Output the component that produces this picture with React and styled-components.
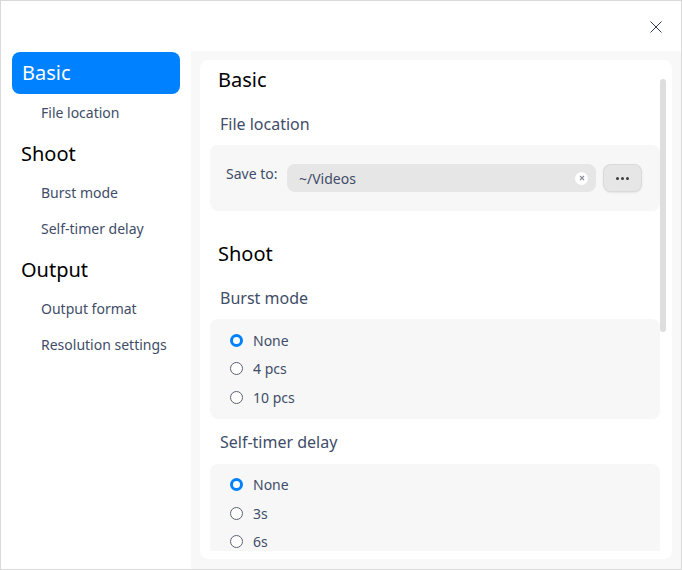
import React from 'react';
import styled, { createGlobalStyle, css } from 'styled-components';

const GlobalStyle = createGlobalStyle`
  html, body {
    margin: 0;
    padding: 0;
    background: #ffffff;
  }
  * {
    box-sizing: border-box;
  }
`;

const nav = [
  { title: 'Basic', active: true, items: ['File location'] },
  { title: 'Shoot', items: ['Burst mode', 'Self-timer delay'] },
  { title: 'Output', items: ['Output format', 'Resolution settings'] },
];

const App = () => {
  return (
    <>
      <GlobalStyle />
      <Window>
        <TitleBar>
          <CloseButton aria-label="close">
            <svg width="12" height="12" viewBox="0 0 12 12">
              <path d="M0.5 0.5 L11.5 11.5 M11.5 0.5 L0.5 11.5" stroke="#2f3a56" strokeWidth="1" fill="none" />
            </svg>
          </CloseButton>
        </TitleBar>
        <Body>
          <Sidebar>
            {nav.map((group) => (
              <React.Fragment key={group.title}>
                <NavHeading active={group.active}>{group.title}</NavHeading>
                {group.items.map((item) => (
                  <NavItem key={item}>{item}</NavItem>
                ))}
              </React.Fragment>
            ))}
          </Sidebar>
          <Panel>
            <Card>
              <Scroll>
                <SectionHeading>Basic</SectionHeading>
                <GroupTitle>File location</GroupTitle>
                <GroupBox Row>
                  <FieldLabel>Save to:</FieldLabel>
                  <PathInput>
                    <PathText>~/Videos</PathText>
                    <ClearDot>
                      <svg width="6" height="6" viewBox="0 0 6 6">
                        <path d="M1 1 L5 5 M5 1 L1 5" stroke="#8a8f99" strokeWidth="1.1" fill="none" />
                      </svg>
                    </ClearDot>
                  </PathInput>
                  <MoreButton>
                    <Dot />
                    <Dot />
                    <Dot />
                  </MoreButton>
                </GroupBox>

                <SectionHeading Spaced>Shoot</SectionHeading>
                <GroupTitle>Burst mode</GroupTitle>
                <GroupBox>
                  <RadioRow><Radio checked /><RadioLabel>None</RadioLabel></RadioRow>
                  <RadioRow><Radio /><RadioLabel>4 pcs</RadioLabel></RadioRow>
                  <RadioRow><Radio /><RadioLabel>10 pcs</RadioLabel></RadioRow>
                </GroupBox>
                <GroupTitle Near>Self-timer delay</GroupTitle>
                <GroupBox>
                  <RadioRow><Radio checked /><RadioLabel>None</RadioLabel></RadioRow>
                  <RadioRow><Radio /><RadioLabel>3s</RadioLabel></RadioRow>
                  <RadioRow><Radio /><RadioLabel>6s</RadioLabel></RadioRow>
                </GroupBox>
              </Scroll>
              <ScrollThumb />
            </Card>
          </Panel>
        </Body>
      </Window>
    </>
  );
};

const Window = styled.div`
  width: 682px;
  height: 570px;
  border: 1px solid #d9d9d9;
  background: #ffffff;
  display: flex;
  flex-direction: column;
  font-family: "Noto Sans", "Open Sans", sans-serif;
  overflow: hidden;
`;

const TitleBar = styled.div`
  height: 50px;
  flex-shrink: 0;
  display: flex;
  justify-content: flex-end;
  align-items: flex-start;
  padding: 20px 19px 0 0;
`;

const CloseButton = styled.div`
  width: 12px;
  height: 12px;
  display: flex;
`;

const Body = styled.div`
  flex: 1;
  display: flex;
  min-height: 0;
`;

const Sidebar = styled.div`
  width: 190px;
  flex-shrink: 0;
  padding: 1px 11px 0 11px;
  display: flex;
  flex-direction: column;
`;

const NavHeading = styled.div`
  height: 44px;
  padding: 4px 0 0 9px;
  font-size: 20px;
  line-height: 40px;
  color: #000000;

  ${props => props.active && css`
    height: 42px;
    padding: 0 0 0 10px;
    line-height: 42px;
    background: #0081ff;
    color: #ffffff;
    border-radius: 8px;
  `}
`;

const NavItem = styled.div`
  height: 36px;
  line-height: 34px;
  padding: 2px 0 0 29px;
  font-size: 14px;
  color: #414d68;
`;

const Panel = styled.div`
  flex: 1;
  background: #f8f8f8;
  padding: 9px 9px 10px 9px;
  display: flex;
  min-width: 0;
`;

const Card = styled.div`
  flex: 1;
  position: relative;
  background: #ffffff;
  border-radius: 8px;
  padding: 0 12px 8px 10px;
  display: flex;
  min-width: 0;
`;

const Scroll = styled.div`
  flex: 1;
  overflow: hidden;
  display: flex;
  flex-direction: column;
  padding-top: 6px;
`;

const ScrollThumb = styled.div`
  position: absolute;
  top: 19px;
  right: 6px;
  width: 6px;
  height: 253px;
  border-radius: 3px;
  background: #dedede;
`;

const SectionHeading = styled.div`
  flex-shrink: 0;
  height: 28px;
  line-height: 28px;
  padding-left: 8px;
  font-size: 20px;
  color: #000000;
  ${props => props.Spaced && css`
    margin-top: 29px;
  `}
`;

const GroupTitle = styled.div`
  flex-shrink: 0;
  height: 24px;
  line-height: 24px;
  margin-top: 18px;
  margin-bottom: 9px;
  padding-left: 10px;
  font-size: 16px;
  color: #414d68;
  ${props => props.Near && css`
    margin-top: 11px;
    margin-bottom: 10px;
  `}
`;

const GroupBox = styled.div`
  flex-shrink: 0;
  background: #f7f7f7;
  border-radius: 8px;
  padding: 7px 0 7px 20px;
  display: flex;
  flex-direction: column;

  ${props => props.Row && css`
    flex-direction: row;
    align-items: flex-start;
    padding: 19px 18px 19px 16px;
  `}
`;

const FieldLabel = styled.div`
  font-size: 14px;
  line-height: 20px;
  color: #414d68;
  width: 61px;
  flex-shrink: 0;
`;

const PathInput = styled.div`
  flex: 1;
  height: 28px;
  border-radius: 8px;
  background: #e6e6e6;
  display: flex;
  align-items: center;
  padding: 0 8px 0 12px;
`;

const PathText = styled.div`
  flex: 1;
  font-size: 14px;
  color: #414d68;
`;

const ClearDot = styled.div`
  width: 13px;
  height: 13px;
  border-radius: 50%;
  background: #ffffff;
  display: flex;
  align-items: center;
  justify-content: center;
`;

const MoreButton = styled.div`
  margin-left: 7px;
  width: 39px;
  height: 28px;
  border-radius: 8px;
  background: #e6e6e6;
  border: 1px solid rgba(0, 0, 0, 0.05);
  box-shadow: 0 1px 2px rgba(0, 0, 0, 0.08);
  display: flex;
  align-items: center;
  justify-content: center;
  gap: 2px;
`;

const Dot = styled.span`
  width: 3px;
  height: 3px;
  border-radius: 50%;
  background: #3c3c3c;
`;

const RadioRow = styled.div`
  height: 28.5px;
  display: flex;
  align-items: center;
  flex-shrink: 0;
`;

const Radio = styled.span`
  width: 13px;
  height: 13px;
  border-radius: 50%;
  border: 1px solid #5d6270;
  background: #ffffff;
  flex-shrink: 0;

  ${props => props.checked && css`
    border: 3.5px solid #0081ff;
  `}
`;

const RadioLabel = styled.span`
  margin-left: 10px;
  font-size: 14px;
  color: #414d68;
`;

export default App;
